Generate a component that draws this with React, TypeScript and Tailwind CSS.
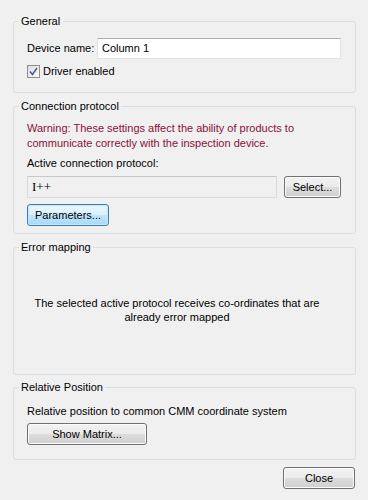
import React from 'react'

// Windows 7 style dialog: driver settings
const font = { fontFamily: '"Liberation Sans", Arial, sans-serif' }

function Group({ title, className, children }: { title: string; className?: string; children: React.ReactNode }) {
  return (
    <fieldset className={`border border-[#d5dfe5] rounded-[3px] p-0 m-0 min-w-0 ${className ?? ''}`}>
      <legend className="ml-[5px] px-[2px] leading-[14px] text-[11px] text-black">{title}</legend>
      {children}
    </fieldset>
  )
}

function Button({ label, className, focused }: { label: string; className?: string; focused?: boolean }) {
  return (
    <button
      className={`h-[22px] rounded-[3px] border text-[11px] leading-none text-black flex items-center justify-center ${
        focused
          ? 'border-[#3c7fb1] bg-[linear-gradient(#eaf6fd_0%,#d9f0fc_50%,#bee6fd_51%,#a7d9f5_100%)] shadow-[inset_0_0_0_1px_#c7e6f8]'
          : 'border-[#707070] bg-[linear-gradient(#f2f2f2_0%,#ebebeb_50%,#dddddd_51%,#cfcfcf_100%)] shadow-[inset_0_0_0_1px_#fcfcfc]'
      } ${className ?? ''}`}
    >
      {label}
    </button>
  )
}

export default function App() {
  return (
    <div className="w-[368px] h-[500px] bg-[#f0f0f0] pt-[14px] pl-[13px] pr-[12px] flex flex-col" style={font}>
      {/* General */}
      <Group title="General" className="h-[79px]">
        <div className="px-[13px] pt-[10px]">
          <div className="flex items-center h-[21px]">
            <span className="text-[11px] w-[70px]">Device name:</span>
            <div className="flex-1 mr-[1px] h-[21px] bg-white border border-[#e2e3ea] border-t-[#abadb3] flex items-center px-[4px] text-[11px]">
              Column 1
            </div>
          </div>
          <div className="flex items-center mt-[4px]">
            <span className="w-[13px] h-[13px] border border-[#8e8f8f] bg-[linear-gradient(135deg,#dcdcdc,#fbfbfb)] flex items-center justify-center">
              <svg width="9" height="9" viewBox="0 0 9 9">
                <path d="M1 4.5 L3.5 7.5 L8 1" fill="none" stroke="#4a5f97" strokeWidth="1.6" />
              </svg>
            </span>
            <span className="ml-[3px] text-[11px]">Driver enabled</span>
          </div>
        </div>
      </Group>

      {/* Connection protocol */}
      <Group title="Connection protocol" className="mt-[6px] h-[135px]">
        <div className="px-[13px] pt-[8px]">
          <p className="text-[11px] leading-[15px] text-[#8a0f3a]">
            Warning: These settings affect the ability of products to communicate correctly with the inspection device.
          </p>
          <p className="text-[11px] leading-[15px] mt-[5px]">Active connection protocol:</p>
          <div className="flex items-center mt-[5px]">
            <div
              className="w-[250px] h-[22px] border border-[#dcdcdc] border-t-[#c9c9c9] bg-[#f0f0f0] flex items-center px-[4px] text-[13px]"
              style={{ fontFamily: '"Liberation Serif", serif' }}
            >
              I++
            </div>
            <Button label="Select..." className="ml-[7px] w-[57px]" />
          </div>
          <Button label="Parameters..." focused className="mt-[6px] w-[82px]" />
        </div>
      </Group>

      {/* Error mapping */}
      <Group title="Error mapping" className="mt-[6px] h-[135px]">
        <div className="pt-[42px] pl-[13px]">
          <p className="text-[11px] leading-[14px] text-center w-[300px]">
            The selected active protocol receives co-ordinates that are already error mapped
          </p>
        </div>
      </Group>

      {/* Relative Position */}
      <Group title="Relative Position" className="mt-[5px] h-[80px]">
        <div className="px-[13px] pt-[10px]">
          <p className="text-[11px] leading-[14px]">Relative position to common CMM coordinate system</p>
          <Button label="Show Matrix..." className="mt-[5px] w-[120px]" />
        </div>
      </Group>

      <div className="flex justify-end mt-[7px] pr-[1px]">
        <Button label="Close" className="w-[72px]" />
      </div>
    </div>
  )
}
